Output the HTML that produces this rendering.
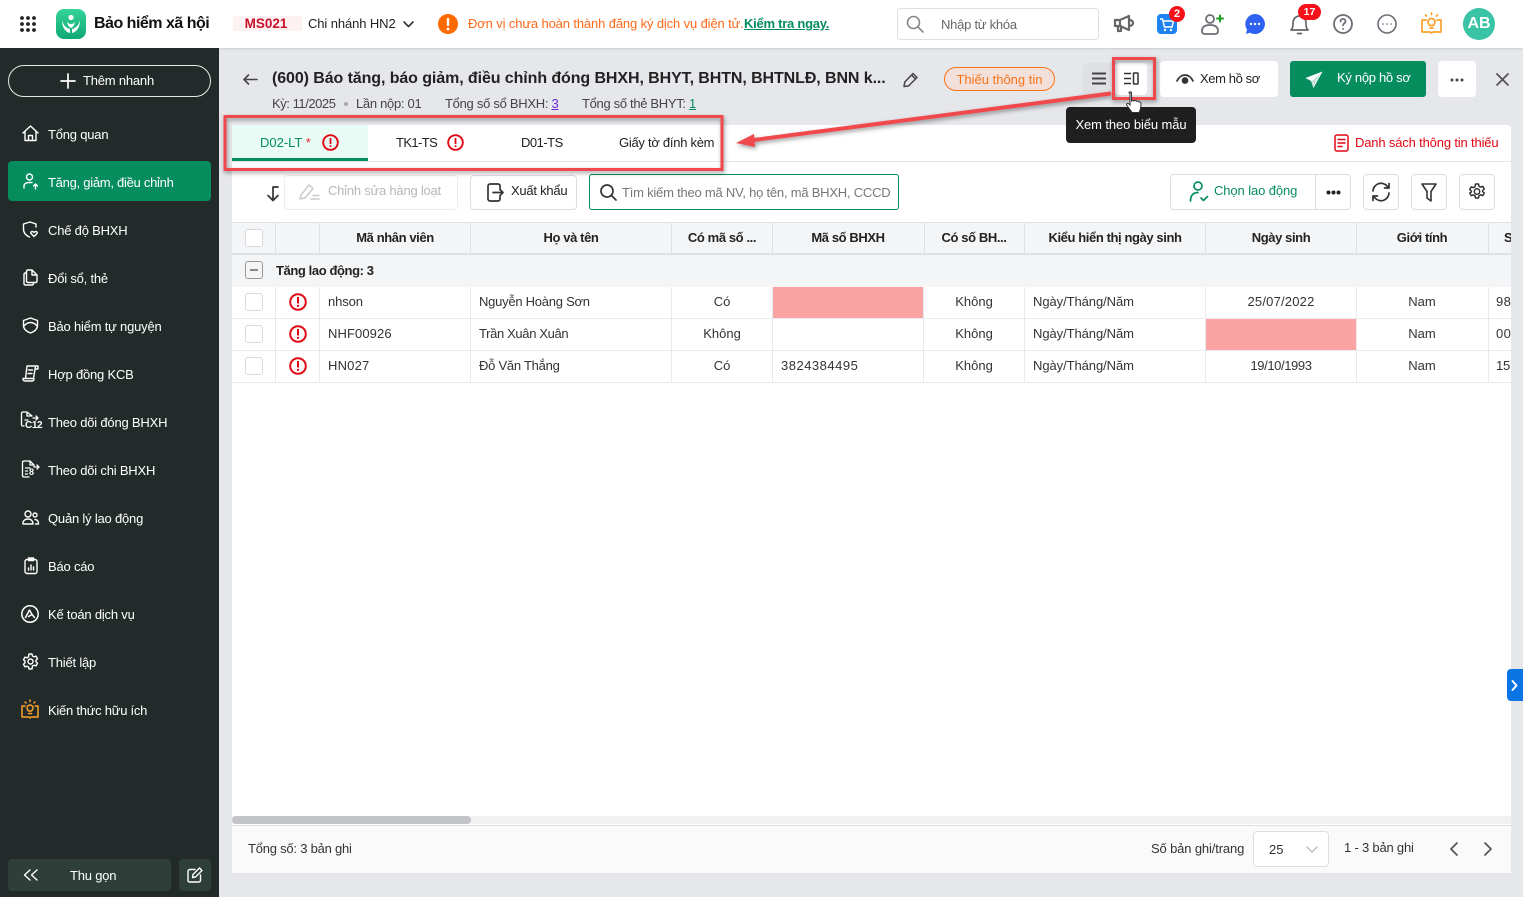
<!DOCTYPE html>
<html lang="vi"><head><meta charset="utf-8"><title>Bảo hiểm xã hội</title>
<style>
*{box-sizing:border-box}
html,body{margin:0;padding:0}
body{width:1523px;height:897px;overflow:hidden;position:relative;background:#E6E7EB;font-family:"Liberation Sans",sans-serif;font-size:13px;color:#222;letter-spacing:-.2px}
.a{position:absolute}
.t{position:absolute;white-space:nowrap;line-height:16px;height:16px;transform:translateY(-8px)}
.c{transform:translate(-50%,-8px)}
.b{font-weight:700;letter-spacing:-.4px}
.n{letter-spacing:0}
.s{position:absolute;overflow:visible;fill:none;stroke-linecap:round;stroke-linejoin:round}
.side{color:#fff}
.btn{position:absolute;background:#fff;border:1px solid #dcdee2;border-radius:4px}
.line{position:absolute;background:#e9eaed}
.th{position:absolute;top:223px;height:31px;width:1px;background:#dfe1e8}
.cb{position:absolute;width:18px;height:18px;border:1.5px solid #d8dade;border-radius:3px;background:#fff}
</style></head><body>

<!-- top bar -->
<div class="a" style="left:0;top:0;width:1523px;height:48px;background:#fff;box-shadow:0 1px 2px rgba(0,0,0,.12)"></div>
<svg class="s" style="left:20px;top:16px" width="17" height="17" fill="#222"><g fill="#222" stroke="none"><circle cx="2" cy="2" r="1.900"/><circle cx="8" cy="2" r="1.900"/><circle cx="14" cy="2" r="1.900"/><circle cx="2" cy="8" r="1.900"/><circle cx="8" cy="8" r="1.900"/><circle cx="14" cy="8" r="1.900"/><circle cx="2" cy="14" r="1.900"/><circle cx="8" cy="14" r="1.900"/><circle cx="14" cy="14" r="1.900"/></g></svg>
<svg class="a" style="left:56px;top:9px" width="30" height="30" viewBox="0 0 30 30"><defs><linearGradient id="lg" x1="0" y1="0" x2="0" y2="1"><stop offset="0" stop-color="#34D49A"/><stop offset="1" stop-color="#0FA873"/></linearGradient></defs><rect width="30" height="30" rx="8" fill="url(#lg)"/><circle cx="15" cy="8.500" r="2.600" fill="#fff"/><path d="M6 11c1 5 4 8 8 9v4c-5-1-8-6-8-13zM24 11c-1 5-4 8-8 9v4c5-1 8-6 8-13z" fill="#fff"/><path d="M11 13c1.500 1.500 2.500 2 4 2s2.500-.5 4-2c-.5 3-2 5-4 6-2-1-3.500-3-4-6z" fill="#fff"/></svg>
<div class="t b" style="left:94px;top:24px;font-size:16px;color:#111;letter-spacing:-.5px">Bảo hiểm xã hội</div>
<div class="a" style="left:233px;top:16px;width:69px;height:15px;background:#FDF1F1"></div>
<div class="t b c n" style="left:266px;top:24px;color:#C8102E;font-size:13.500px;letter-spacing:0">MS021</div>
<div class="t" style="left:308px;top:24px;color:#222;letter-spacing:-.1px">Chi nhánh HN2</div>
<svg class="s" style="left:403px;top:21px" width="11" height="7" stroke="#333" stroke-width="1.600"><path d="M1 1l4.500 4.500L10 1"/></svg>
<svg class="a" style="left:438px;top:14px" width="20" height="20"><circle cx="10" cy="10" r="10" fill="#FF6A00"/><rect x="8.800" y="4" width="2.400" height="8" rx="1" fill="#fff"/><circle cx="10" cy="15" r="1.400" fill="#fff"/></svg>
<div class="t" style="left:468px;top:24px;color:#FF6A1A;letter-spacing:-.13px">Đơn vị chưa hoàn thành đăng ký dịch vụ điện tử.</div>
<div class="t b" style="left:744px;top:24px;color:#068D5E;text-decoration:underline;letter-spacing:-.25px">Kiểm tra ngay.</div>

<div class="a" style="left:897px;top:8px;width:202px;height:32px;border:1px solid #dcdee2;border-radius:4px;background:#fff"></div>
<svg class="s" style="left:906px;top:15px" width="18" height="18" stroke="#888" stroke-width="1.600"><circle cx="7.500" cy="7.500" r="6"/><path d="M12 12l5 5"/></svg>
<div class="t" style="left:941px;top:25px;color:#666;letter-spacing:-.25px">Nhập từ khóa</div>

<svg class="s" style="left:1113px;top:14px" width="22" height="20" stroke="#666" stroke-width="2.200"><path d="M2 6h5l9-4v14l-9-4H2zM7 6v6M5 12v5h3v-5M16 6c3 0 4 1.500 4 3s-1 3-4 3"/></svg>
<svg class="a" style="left:1157px;top:14px" width="20" height="20"><rect width="20" height="20" rx="4" fill="#1E83F0"/><path d="M3 5h2.500l2 8h7.500l1.500-6H6" fill="none" stroke="#fff" stroke-width="1.500"/><circle cx="8" cy="16" r="1.200" fill="#fff"/><circle cx="14" cy="16" r="1.200" fill="#fff"/></svg>
<div class="a n" style="left:1169px;top:6px;width:16px;height:16px;border-radius:50%;background:#F5111A;color:#fff;font-size:11px;font-weight:700;text-align:center;line-height:16px">2</div>
<svg class="s" style="left:1200px;top:13px" width="24" height="22" stroke="#6b6f75" stroke-width="1.800"><circle cx="10" cy="6" r="4"/><path d="M2 18c0-4 3-6 8-6s8 2 8 6c0 2-1 3-3 3H5c-2 0-3-1-3-3z"/><path d="M17 5.500h6M20 2.500v6" stroke="#1E9E1E" stroke-width="2"/></svg>
<svg class="a" style="left:1245px;top:14px" width="20" height="20"><path d="M10 0a10 10 0 1 1-5 18.700L1 20l1-4.500A10 10 0 0 1 10 0z" fill="#2F62F0"/><circle cx="6" cy="10" r="1.200" fill="#fff"/><circle cx="10" cy="10" r="1.200" fill="#fff"/><circle cx="14" cy="10" r="1.200" fill="#fff"/></svg>
<svg class="s" style="left:1289px;top:12px" width="21" height="24" stroke="#666" stroke-width="1.700"><path d="M2 18c2-2 2-4 2-7 0-4 3-7 6.500-7S17 7 17 11c0 3 0 5 2 7zM8.500 21.500h4"/></svg>
<div class="a n" style="left:1298px;top:4px;width:23px;height:16px;border-radius:8px;background:#F5111A;color:#fff;font-size:10.500px;font-weight:700;text-align:center;line-height:16px">17</div>
<svg class="s" style="left:1333px;top:14px" width="20" height="20" stroke="#6b6f75" stroke-width="1.800"><circle cx="10" cy="10" r="9"/><path d="M7.500 7.500c0-1.500 1-2.500 2.500-2.500s2.500 1 2.500 2.400c0 2-2.500 2.100-2.500 4"/><path d="M10 14.800v.2"/></svg>
<svg class="s" style="left:1377px;top:14px" width="20" height="20" stroke="#6b6f75" stroke-width="1.600"><circle cx="10" cy="10" r="9"/><path d="M6 10h.1M10 10h.1M14 10h.1"/></svg>
<svg class="s" style="left:1421px;top:12px" width="21" height="23" stroke="#F9A12B" stroke-width="1.700"><path d="M5 8H1v12h8l1.500 1 1.500-1h8V8h-4"/><path d="M7 10a3.500 3.500 0 1 1 7 0c0 1.500-1 2-1.500 3.500h-4C8 12 7 11.500 7 10zM9 16h3"/><path d="M10.500 1v1.500M4.500 3l1 1M16.500 3l-1 1"/></svg>
<div class="a n" style="left:1463px;top:8px;width:32px;height:32px;border-radius:50%;background:#3AC3A4;color:#fff;font-size:16px;font-weight:700;text-align:center;line-height:32px">AB</div>

<!-- sidebar -->
<div class="a" style="left:0;top:48px;width:219px;height:849px;background:#232B2A"></div>
<div class="a" style="left:8px;top:65px;width:203px;height:32px;border:1px solid #e8e8e8;border-radius:16px"></div>
<svg class="s" style="left:61px;top:74px" width="14" height="14" stroke="#fff" stroke-width="1.700"><path d="M7 0v14M0 7h14"/></svg>
<div class="t side" style="left:83px;top:81px">Thêm nhanh</div>
<div class="a" style="left:8px;top:161px;width:203px;height:40px;border-radius:4px;background:#068D5E"></div>

<svg class="s" style="left:22px;top:125px" width="17" height="17" stroke="#fff" stroke-width="1.400"><path d="M1 8l7.500-7L16 8M3 6.500V15.500h11V6.500M6.500 15.500v-5h4v5"/></svg>
<div class="t side" style="left:48px;top:135px">Tổng quan</div>
<svg class="s" style="left:23px;top:173px" width="16" height="18" stroke="#fff" stroke-width="1.400"><circle cx="6.500" cy="4" r="3"/><path d="M1 15v-2c0-2 2-3.500 5.500-3.500H9M12.500 16v-5M10.500 13l2-2 2 2"/></svg>
<div class="t side" style="left:48px;top:183px;letter-spacing:-.27px">Tăng, giảm, điều chỉnh</div>
<svg class="s" style="left:22px;top:221px" width="17" height="17" stroke="#fff" stroke-width="1.400"><path d="M8 1L1.500 3v5c0 4 2.500 6.500 6 8M8 1l6 2v3"/><path d="M12 15.500l-3-3c-1-1.500 1.500-3 3-1 1.500-2 4-.5 3 1z"/></svg>
<div class="t side" style="left:48px;top:231px">Chế độ BHXH</div>
<svg class="s" style="left:23px;top:269px" width="15" height="17" stroke="#fff" stroke-width="1.400"><path d="M5 1h4l5 5v6c0 1-.5 1.500-1.500 1.500H5c-1 0-1.500-.5-1.500-1.500V2.500C3.500 1.500 4 1 5 1zM9 1v5h5"/><path d="M3.500 4H2.500C1.500 4 1 4.500 1 5.500v9c0 1 .5 1.500 1.500 1.500H9c1 0 1.500-.5 1.500-1.500v-1"/></svg>
<div class="t side" style="left:48px;top:279px">Đổi sổ, thẻ</div>
<svg class="s" style="left:22px;top:317px" width="17" height="17" stroke="#fff" stroke-width="1.400"><path d="M8.500 1l7 2.500v5c0 3.500-3 6-7 7.500-4-1.500-7-4-7-7.500v-5z"/><path d="M2 9c2-2.500 4-3.500 6.500-3.500S13 6.500 15 9"/></svg>
<div class="t side" style="left:48px;top:327px">Bảo hiểm tự nguyện</div>
<svg class="s" style="left:22px;top:365px" width="17" height="17" stroke="#fff" stroke-width="1.400"><path d="M5 1h8.500l-2 12.500M3 13.500h9c0 1.500-.5 2.500-2 2.500H3c-1.500 0-2-1-2-2.500zM5 1L3.500 13.500M6.500 5h4M6 8.500h4M14 1h2v3h-2"/></svg>
<div class="t side" style="left:48px;top:375px">Hợp đồng KCB</div>
<svg class="s" style="left:20px;top:411px" width="20" height="20" stroke="#fff" stroke-width="1.300"><path d="M7 1H3C2 1 1.500 1.500 1.500 2.500v11c0 1 .5 1.500 1.500 1.500h1M7 1l5 4H7zM5 9h3M13 7h5M16 5l2 2-2 2"/></svg>
<div class="a" style="left:25px;top:420px;font-size:10px;line-height:11px;font-weight:700;color:#fff;letter-spacing:-.4px">C12</div>
<div class="t side" style="left:48px;top:423px">Theo dõi đóng BHXH</div>
<svg class="s" style="left:21px;top:460px" width="19" height="19" stroke="#fff" stroke-width="1.300"><path d="M3 1h6l4 4v2M3 1C2 1 1.500 1.500 1.500 2.500v13c0 1 .5 1.500 1.500 1.500h5M9 1v4h4M4.500 8H9M4.500 11h2M4.500 14h2M14 7h4M16 5l2 2-2 2"/></svg>
<div class="a" style="left:29px;top:467px;font-size:9px;line-height:11px;font-weight:700;color:#fff">8</div>
<div class="t side" style="left:48px;top:471px">Theo dõi chi BHXH</div>
<svg class="s" style="left:22px;top:510px" width="17" height="15" stroke="#fff" stroke-width="1.400"><circle cx="6" cy="4" r="3"/><circle cx="13" cy="5" r="2"/><path d="M1 14c-.5-3 2-5 5-5s5 2 5 5zM13 9.500c2 0 3.500 1.500 3.500 4.500h-3"/></svg>
<div class="t side" style="left:48px;top:519px">Quản lý lao động</div>
<svg class="s" style="left:24px;top:557px" width="14" height="17" stroke="#fff" stroke-width="1.400"><rect x="1" y="2.500" width="12" height="14" rx="2"/><path d="M4.500 2.500V1h5v2.500h-5zM4.500 13v-2M7 13V8M9.500 13v-3"/></svg>
<div class="t side" style="left:48px;top:567px">Báo cáo</div>
<svg class="s" style="left:21px;top:605px" width="18" height="18" stroke="#fff" stroke-width="1.500"><circle cx="9" cy="9" r="8.200"/><path d="M4.500 12.500L8.500 5l2.500 4.500M7.500 11.500l3.500-2 2.500 3"/></svg>
<div class="t side" style="left:48px;top:615px">Kế toán dịch vụ</div>
<svg class="s" style="left:22px;top:653px" width="17" height="17" stroke="#fff" stroke-width="1.400"><path d="M7 1h3l.5 2 1.500.8 2-.7 1.500 2.600-1.500 1.400v1.800l1.500 1.400-1.500 2.600-2-.7-1.500.8L10 16H7l-.5-2-1.500-.8-2 .7L1.500 11.300 3 9.900V8.100L1.500 6.700 3 4.100l2 .7 1.500-.8z"/><circle cx="8.500" cy="8.500" r="2.500"/></svg>
<div class="t side" style="left:48px;top:663px">Thiết lập</div>
<svg class="s" style="left:21px;top:699px" width="18" height="20" stroke="#F9A12B" stroke-width="1.500"><path d="M4 7H1v11h7l1 1 1-1h7V7h-3"/><path d="M6 9a3 3 0 1 1 6 0c0 1.500-1 2-1.500 3h-3C7 11 6 10.500 6 9zM7.500 14.500h3"/><path d="M9 1v1.500M4 3l1 1M14 3l-1 1"/></svg>
<div class="t side" style="left:48px;top:711px;letter-spacing:-.25px">Kiến thức hữu ích</div>

<div class="a" style="left:8px;top:859px;width:163px;height:32px;background:#2E3F3A;border-radius:4px"></div>
<svg class="s" style="left:23px;top:869px" width="15" height="12" stroke="#fff" stroke-width="1.400"><path d="M7 1L1.500 6 7 11M14 1L8.500 6 14 11"/></svg>
<div class="t side" style="left:70px;top:876px">Thu gọn</div>
<div class="a" style="left:179px;top:859px;width:32px;height:32px;background:#2E3F3A;border-radius:4px"></div>
<svg class="s" style="left:187px;top:867px" width="16" height="16" stroke="#fff" stroke-width="1.400"><path d="M8 2.500H3C1.800 2.500 1 3.300 1 4.500v9c0 1 .8 1.500 1.500 1.500h9c1.200 0 2-.8 2-2V8"/><path d="M5.500 10.500l.5-3L12.500 1l2.500 2.500L8.500 10z"/></svg>

<!-- title -->
<svg class="s" style="left:243px;top:74px" width="15" height="11" stroke="#444" stroke-width="1.600"><path d="M14 5.500H1M5.500 1L1 5.500 5.500 10"/></svg>
<div class="t b" style="left:272px;top:79px;font-size:16px;color:#222;letter-spacing:-.09px">(600) Báo tăng, báo giảm, điều chỉnh đóng BHXH, BHYT, BHTN, BHTNLĐ, BNN k...</div>
<div class="t" style="left:272px;top:104px;color:#444;letter-spacing:-.45px">Kỳ: 11/2025</div>
<div class="a" style="left:344px;top:102px;width:4px;height:4px;border-radius:50%;background:#aaa"></div>
<div class="t" style="left:356px;top:104px;color:#444;letter-spacing:-.3px">Lần nộp: 01</div>
<div class="t" style="left:445px;top:104px;color:#444;letter-spacing:-.28px">Tổng số sổ BHXH: <span style="color:#6A2BE8;text-decoration:underline">3</span></div>
<div class="t" style="left:582px;top:104px;color:#444;letter-spacing:-.32px">Tổng số thẻ BHYT: <span style="color:#068D5E;text-decoration:underline">1</span></div>
<svg class="s" style="left:902px;top:71px" width="17" height="17" stroke="#444" stroke-width="1.500"><path d="M2 15.500l.8-4.500L11 2.500 15 6.500 6.500 15zM9.500 4L13.500 8"/></svg>
<div class="a n" style="left:944px;top:67px;width:111px;height:24px;border:1px solid #F97316;border-radius:12px;background:#F3E0DA;color:#F97316;text-align:center;line-height:23px">Thiếu thông tin</div>

<div class="a" style="left:1083px;top:63px;width:64px;height:32px;background:#DFE0E4;border-radius:4px"></div>
<div class="a" style="left:1115px;top:63px;width:32px;height:32px;background:#fff;border-radius:4px"></div>
<svg class="s" style="left:1091px;top:72px" width="16" height="13" stroke="#444" stroke-width="2"><path d="M1 1.500h14M1 6.500h14M1 11.500h14" stroke-linecap="butt"/></svg>
<svg class="s" style="left:1123px;top:72px" width="16" height="13" stroke="#333" stroke-width="1.500"><path d="M1 1.500h7M1 6.500h7M1 11.500h7" stroke-linecap="butt"/><rect x="10.500" y="1" width="4.500" height="11" rx=".5"/></svg>
<div class="a" style="left:1160px;top:61px;width:118px;height:36px;background:#fff;border-radius:4px"></div>
<svg class="s" style="left:1176px;top:73px" width="18" height="12" stroke="#333" stroke-width="1.700"><path d="M1 8c2-4 5-6 8-6s6 2 8 6"/><circle cx="9" cy="7.500" r="2.500" fill="#333"/></svg>
<div class="t" style="left:1200px;top:79px;color:#222;letter-spacing:-.4px">Xem hồ sơ</div>
<div class="a" style="left:1290px;top:61px;width:136px;height:36px;background:#068D5E;border-radius:3px"></div>
<svg class="a" style="left:1305px;top:71px" width="18" height="18"><path d="M17.500 .5L.5 7l5.500 3L8.500 17z" fill="#fff"/><path d="M15 3L6.500 10.500l2 4.500z" fill="#068D5E" opacity=".25"/></svg>
<div class="t" style="left:1337px;top:78px;color:#fff;letter-spacing:-.3px">Ký nộp hồ sơ</div>
<div class="a" style="left:1438px;top:61px;width:38px;height:36px;background:#fff;border-radius:4px"></div>
<svg class="a" style="left:1450px;top:78px" width="14" height="4"><circle cx="2" cy="2" r="1.500" fill="#444"/><circle cx="7" cy="2" r="1.500" fill="#444"/><circle cx="12" cy="2" r="1.500" fill="#444"/></svg>
<svg class="s" style="left:1496px;top:73px" width="13" height="13" stroke="#555" stroke-width="1.800"><path d="M1 1l11 11M12 1L1 12"/></svg>

<!-- panel -->
<div class="a" style="left:232px;top:125px;width:1279px;height:748px;background:#fff;border-radius:4px 4px 0 0"></div>
<div class="a" style="left:232px;top:161px;width:1279px;height:1px;background:#e4e5e8"></div>
<div class="a" style="left:232px;top:125px;width:136px;height:36px;background:#E8FBF5"></div>
<div class="a" style="left:232px;top:158px;width:136px;height:3px;background:#068D5E"></div>
<div class="t n" style="left:260px;top:143px;color:#068D5E">D02-LT <span style="color:#e3232b">*</span></div>
<svg class="a" style="left:322px;top:134px" width="17" height="17"><circle cx="8.500" cy="8.500" r="7.300" fill="none" stroke="#E30613" stroke-width="1.900"/><rect x="7.600" y="4" width="1.800" height="6" fill="#E30613"/><rect x="7.600" y="11.200" width="1.800" height="1.800" fill="#E30613"/></svg>
<div class="t" style="left:396px;top:143px;color:#222;letter-spacing:-.6px">TK1-TS</div>
<svg class="a" style="left:447px;top:134px" width="17" height="17"><circle cx="8.500" cy="8.500" r="7.300" fill="none" stroke="#E30613" stroke-width="1.900"/><rect x="7.600" y="4" width="1.800" height="6" fill="#E30613"/><rect x="7.600" y="11.200" width="1.800" height="1.800" fill="#E30613"/></svg>
<div class="t" style="left:521px;top:143px;color:#222;letter-spacing:-.5px">D01-TS</div>
<div class="t" style="left:619px;top:143px;color:#222;letter-spacing:-.27px">Giấy tờ đính kèm</div>
<svg class="s" style="left:1334px;top:134px" width="15" height="18" stroke="#E30613" stroke-width="1.500"><rect x="1" y="1" width="13" height="16" rx="2"/><path d="M4 5.500h7M4 9h7M4 12.500h4"/></svg>
<div class="t" style="left:1355px;top:143px;color:#E30613;letter-spacing:-.16px">Danh sách thông tin thiếu</div>

<!-- toolbar -->
<svg class="s" style="left:266px;top:186px" width="13" height="16" stroke="#333" stroke-width="1.700"><path d="M12 1H7v13M2 9.500l5 5 5-5"/></svg>
<div class="btn" style="left:284px;top:175px;width:174px;height:35px;border-color:#eceded"></div>
<svg class="s" style="left:299px;top:183px" width="21" height="18" stroke="#c9cbcf" stroke-width="1.500"><path d="M1 16l1-4L10 2l4 3.500L6 15zM12 16h8M14 12.500h6"/></svg>
<div class="t" style="left:328px;top:191px;color:#b5b7ba;letter-spacing:-.22px">Chỉnh sửa hàng loạt</div>
<div class="btn" style="left:470px;top:175px;width:107px;height:35px"></div>
<svg class="s" style="left:487px;top:183px" width="17" height="19" stroke="#333" stroke-width="1.700"><path d="M13 6V3c0-1-.8-2-2-2H3C2 1 1 2 1 3v13c0 1 1 2 2 2h8c1.200 0 2-1 2-2v-3M6 9.500h10M13 6.500l3 3-3 3"/></svg>
<div class="t" style="left:511px;top:191px;color:#222;letter-spacing:-.25px">Xuất khẩu</div>
<div class="a" style="left:589px;top:174px;width:310px;height:36px;border:1px solid #068D5E;border-radius:3px"></div>
<svg class="s" style="left:600px;top:184px" width="17" height="17" stroke="#333" stroke-width="1.700"><circle cx="7" cy="7" r="6"/><path d="M11.500 11.500l4.500 4.500"/></svg>
<div class="t" style="left:622px;top:193px;color:#777;width:269px;overflow:hidden;letter-spacing:-.22px">Tìm kiếm theo mã NV, họ tên, mã BHXH, CCCD</div>

<div class="btn" style="left:1170px;top:174px;width:181px;height:36px"></div>
<div class="a" style="left:1315px;top:174px;width:1px;height:36px;background:#dcdee2"></div>
<svg class="s" style="left:1189px;top:181px" width="20" height="21" stroke="#068D5E" stroke-width="1.700"><circle cx="9" cy="5" r="4"/><path d="M1.500 20c0-6 3-8.500 7.500-8.500M12 17l2.500 2.500 4-4"/></svg>
<div class="t" style="left:1214px;top:191px;color:#068D5E;letter-spacing:-.1px">Chọn lao động</div>
<svg class="a" style="left:1326px;top:190px" width="15" height="5"><circle cx="2.500" cy="2.500" r="2" fill="#222"/><circle cx="7.500" cy="2.500" r="2" fill="#222"/><circle cx="12.500" cy="2.500" r="2" fill="#222"/></svg>
<div class="btn" style="left:1363px;top:174px;width:36px;height:36px"></div>
<svg class="s" style="left:1371px;top:182px" width="20" height="20" stroke="#333" stroke-width="1.700"><path d="M2 9a8 8 0 0 1 14-5l2 2M18 1.500V6h-4.500M18 11a8 8 0 0 1-14 5l-2-2M2 18.500V14h4.500"/></svg>
<div class="btn" style="left:1411px;top:174px;width:36px;height:36px"></div>
<svg class="s" style="left:1421px;top:183px" width="16" height="19" stroke="#333" stroke-width="1.600"><path d="M1 1h14l-5 7.500V18l-4-3V8.500z"/></svg>
<div class="btn" style="left:1459px;top:174px;width:36px;height:36px"></div>
<svg class="s" style="left:1468px;top:183px" width="18" height="18" stroke="#333" stroke-width="1.500"><path d="M7.500 1h3l.5 2.200 1.600.9 2.200-.7 1.500 2.600-1.700 1.500v1l1.700 1.500-1.500 2.600-2.200-.7-1.600.9-.5 2.200h-3l-.5-2.200-1.600-.9-2.200.7-1.500-2.600L3.400 9V8L1.700 6.500l1.500-2.600 2.200.7L7 3.700z"/><circle cx="9" cy="8.500" r="2.700"/></svg>

<!-- table -->
<div class="a" style="left:232px;top:223px;width:1279px;height:64px;background:#F4F5F7"></div>
<div class="a" style="left:232px;top:222px;width:1279px;height:1px;background:#dfe1e8"></div>
<div class="a" style="left:232px;top:253px;width:1279px;height:2px;background:#dfe1e8"></div>
<div class="th" style="left:275px"></div><div class="th" style="left:319px"></div><div class="th" style="left:470px"></div><div class="th" style="left:671px"></div><div class="th" style="left:772px"></div><div class="th" style="left:924px"></div><div class="th" style="left:1024px"></div><div class="th" style="left:1205px"></div><div class="th" style="left:1356px"></div><div class="th" style="left:1488px"></div>
<div class="a" style="left:773px;top:287px;width:150px;height:31px;background:#FCA3A3"></div>
<div class="a" style="left:1206px;top:319px;width:150px;height:31px;background:#FCA3A3"></div>
<div class="line" style="left:232px;top:318px;width:1279px;height:1px"></div>
<div class="line" style="left:232px;top:350px;width:1279px;height:1px"></div>
<div class="line" style="left:232px;top:382px;width:1279px;height:1px"></div>
<div class="line" style="left:275px;top:287px;width:1px;height:96px"></div>
<div class="line" style="left:319px;top:287px;width:1px;height:96px"></div>
<div class="line" style="left:470px;top:287px;width:1px;height:96px"></div>
<div class="line" style="left:671px;top:287px;width:1px;height:96px"></div>
<div class="line" style="left:772px;top:287px;width:1px;height:96px"></div>
<div class="line" style="left:923px;top:287px;width:1px;height:96px"></div>
<div class="line" style="left:1024px;top:287px;width:1px;height:96px"></div>
<div class="line" style="left:1205px;top:287px;width:1px;height:96px"></div>
<div class="line" style="left:1356px;top:287px;width:1px;height:96px"></div>
<div class="line" style="left:1488px;top:287px;width:1px;height:96px"></div>

<div class="cb" style="left:245px;top:229px"></div>
<div class="t b c" style="left:395px;top:238px">Mã nhân viên</div>
<div class="t b c" style="left:571px;top:238px">Họ và tên</div>
<div class="t b c" style="left:722px;top:238px">Có mã số ...</div>
<div class="t b c" style="left:848px;top:238px">Mã số BHXH</div>
<div class="t b c" style="left:974px;top:238px">Có số BH...</div>
<div class="t b c" style="left:1115px;top:238px">Kiểu hiển thị ngày sinh</div>
<div class="t b c" style="left:1281px;top:238px">Ngày sinh</div>
<div class="t b c" style="left:1422px;top:238px">Giới tính</div>
<div class="a" style="left:1497px;top:230px;width:14px;height:16px;overflow:hidden;font-weight:700;line-height:16px;padding-left:7px">S</div>

<div class="a" style="left:245px;top:261px;width:18px;height:18px;border:1.500px solid #999;border-radius:3px;background:#F4F5F7"></div>
<div class="a" style="left:250px;top:269px;width:8px;height:1.500px;background:#888"></div>
<div class="t b" style="left:276px;top:271px">Tăng lao động: 3</div>

<div class="cb" style="left:245px;top:293px"></div><div class="cb" style="left:245px;top:325px"></div><div class="cb" style="left:245px;top:357px"></div>
<svg class="a" style="left:289px;top:293px" width="18" height="18"><circle cx="9" cy="9" r="7.800" fill="none" stroke="#E30613" stroke-width="2"/><rect x="8" y="4" width="2" height="6.500" fill="#E30613"/><rect x="8" y="11.800" width="2" height="2" fill="#E30613"/></svg>
<svg class="a" style="left:289px;top:325px" width="18" height="18"><circle cx="9" cy="9" r="7.800" fill="none" stroke="#E30613" stroke-width="2"/><rect x="8" y="4" width="2" height="6.500" fill="#E30613"/><rect x="8" y="11.800" width="2" height="2" fill="#E30613"/></svg>
<svg class="a" style="left:289px;top:357px" width="18" height="18"><circle cx="9" cy="9" r="7.800" fill="none" stroke="#E30613" stroke-width="2"/><rect x="8" y="4" width="2" height="6.500" fill="#E30613"/><rect x="8" y="11.800" width="2" height="2" fill="#E30613"/></svg>

<div class="t" style="left:328px;top:302px;color:#333;letter-spacing:-.1px">nhson</div>
<div class="t" style="left:479px;top:302px;color:#333;letter-spacing:-.25px">Nguyễn Hoàng Sơn</div>
<div class="t c n" style="left:722px;top:302px;color:#333">Có</div>
<div class="t c n" style="left:974px;top:302px;color:#333">Không</div>
<div class="t" style="left:1033px;top:302px;color:#333;letter-spacing:-.07px">Ngày/Tháng/Năm</div>
<div class="t c" style="left:1281px;top:302px;color:#333;letter-spacing:.2px">25/07/2022</div>
<div class="t c n" style="left:1422px;top:302px;color:#333">Nam</div>
<div class="a" style="left:1496px;top:294px;width:15px;height:16px;overflow:hidden;line-height:16px;color:#333;letter-spacing:.4px">98</div>

<div class="t n" style="left:328px;top:334px;color:#333;letter-spacing:.1px">NHF00926</div>
<div class="t" style="left:479px;top:334px;color:#333;letter-spacing:-.35px">Trần Xuân Xuân</div>
<div class="t c n" style="left:722px;top:334px;color:#333">Không</div>
<div class="t c n" style="left:974px;top:334px;color:#333">Không</div>
<div class="t" style="left:1033px;top:334px;color:#333;letter-spacing:-.07px">Ngày/Tháng/Năm</div>
<div class="t c n" style="left:1422px;top:334px;color:#333">Nam</div>
<div class="a" style="left:1496px;top:326px;width:15px;height:16px;overflow:hidden;line-height:16px;color:#333;letter-spacing:.4px">00</div>

<div class="t n" style="left:328px;top:366px;color:#333;letter-spacing:.2px">HN027</div>
<div class="t" style="left:479px;top:366px;color:#333;letter-spacing:-.25px">Đỗ Văn Thắng</div>
<div class="t c n" style="left:722px;top:366px;color:#333">Có</div>
<div class="t" style="left:781px;top:366px;color:#333;letter-spacing:.5px">3824384495</div>
<div class="t c n" style="left:974px;top:366px;color:#333">Không</div>
<div class="t" style="left:1033px;top:366px;color:#333;letter-spacing:-.07px">Ngày/Tháng/Năm</div>
<div class="t c" style="left:1281px;top:366px;color:#333;letter-spacing:-.4px">19/10/1993</div>
<div class="t c n" style="left:1422px;top:366px;color:#333">Nam</div>
<div class="a" style="left:1496px;top:358px;width:15px;height:16px;overflow:hidden;line-height:16px;color:#333">151</div>

<!-- scrollbar & footer -->
<div class="a" style="left:232px;top:816px;width:1279px;height:8px;background:#f1f1f1"></div>
<div class="a" style="left:232px;top:816px;width:239px;height:8px;background:#c4c5c8;border-radius:4px"></div>
<div class="a" style="left:232px;top:825px;width:1279px;height:48px;background:#FAFAFA;border-top:1px solid #e0e0e0"></div>
<div class="t" style="left:248px;top:849px;color:#333;letter-spacing:-.22px">Tổng số: 3 bản ghi</div>
<div class="t" style="left:1151px;top:849px;color:#333;letter-spacing:-.14px">Số bản ghi/trang</div>
<div class="a" style="left:1253px;top:831px;width:76px;height:36px;background:#fff;border:1px solid #dcdee2;border-radius:4px"></div>
<div class="t n" style="left:1269px;top:850px;color:#333">25</div>
<svg class="s" style="left:1306px;top:846px" width="12" height="7" stroke="#bbb" stroke-width="1.300"><path d="M1 1l5 5 5-5"/></svg>
<div class="t" style="left:1344px;top:848px;color:#333">1 - 3 bản ghi</div>
<svg class="s" style="left:1449px;top:842px" width="9" height="14" stroke="#555" stroke-width="1.700"><path d="M8 1L2 7l6 6"/></svg>
<svg class="s" style="left:1484px;top:842px" width="9" height="14" stroke="#555" stroke-width="1.700"><path d="M1 1l6 6-6 6"/></svg>
<div class="a" style="left:1507px;top:669px;width:16px;height:32px;background:#0B74E5;border-radius:4px 0 0 4px"></div>
<svg class="s" style="left:1511px;top:680px" width="8" height="11" stroke="#fff" stroke-width="2"><path d="M1.500 1l4 4.500-4 4.500"/></svg>

<!-- tooltip -->
<div class="a" style="left:1066px;top:107px;width:130px;height:36px;background:#1F1F1F;border-radius:4px;color:#fff;text-align:center;line-height:35px;letter-spacing:-.1px">Xem theo biểu mẫu</div>

<!-- annotations -->
<svg class="a" style="left:0;top:0;pointer-events:none" width="1523" height="897">
<defs><filter id="sh" x="-5%" y="-20%" width="110%" height="150%"><feDropShadow dx="1" dy="2" stdDeviation="2" flood-color="#000" flood-opacity=".4"/></filter></defs>
<g filter="url(#sh)">
<rect x="225" y="116.500" width="497" height="53" fill="none" stroke="#F04A4E" stroke-width="3"/>
<rect x="1113.500" y="58.500" width="41" height="40" fill="none" stroke="#F04A4E" stroke-width="3"/>
<path d="M1111 93.500L750 140.500" stroke="#F04A4E" stroke-width="4" fill="none"/>
<path d="M736 143l18-9 1 13z" fill="#F04A4E"/>
</g>
</svg>
<svg class="a" style="left:1126px;top:91px" width="19" height="26"><path d="M4 2c0-1.500 2.500-1.500 2.500 0v8c1-1 2-.5 2.500 0 .8-.8 2-.5 2.500.3 1-.6 2.200-.2 2.500.7.800-.2 2 .3 2 1.500 0 4-.5 6-2 9H7c-1-2-3-4-5-7-1-1.500.5-3 2-1.500l1 1V2z" transform="translate(-1 0)" fill="#fff" stroke="#333" stroke-width="1"/></svg>

</body></html>
